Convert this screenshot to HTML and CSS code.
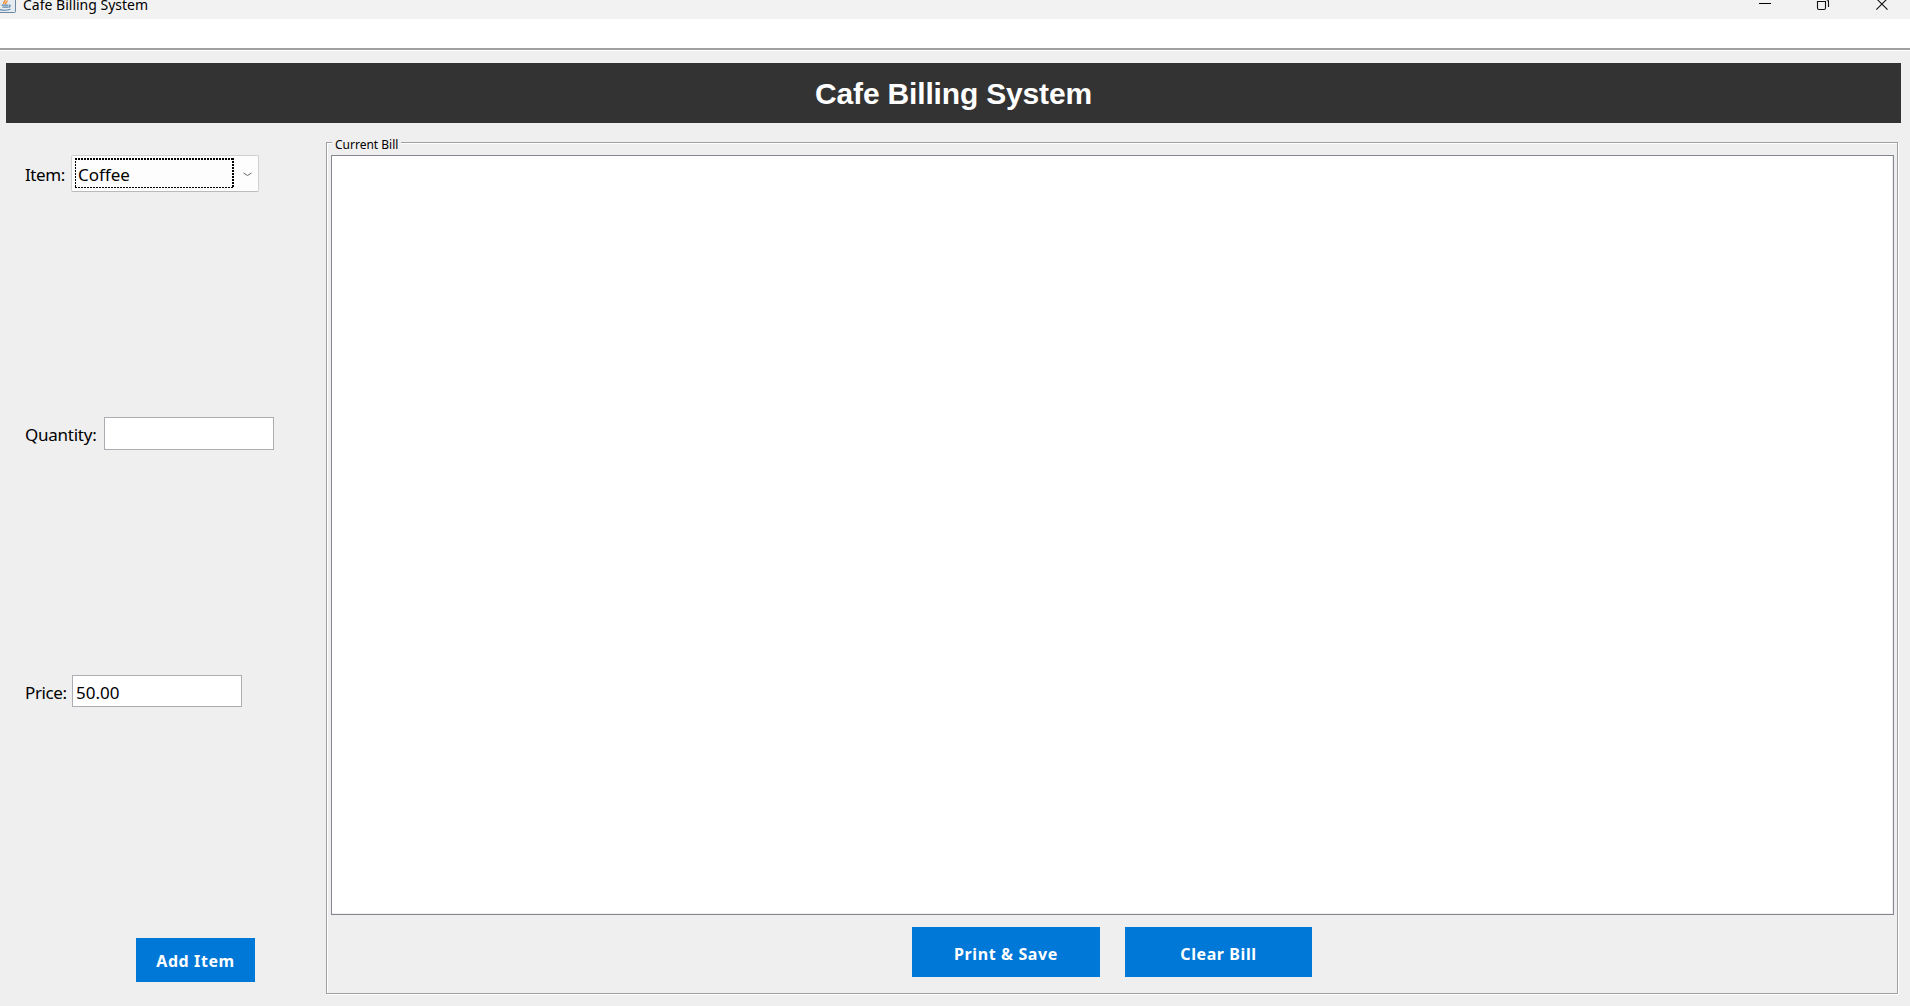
FILE: index.html
```html
<!DOCTYPE html>
<html lang="en">
<head>
<meta charset="utf-8">
<title>Cafe Billing System</title>
<link rel="stylesheet" href="styles.css">
</head>
<body>
<header class="titlebar">
  <svg class="app-icon" width="16" height="13" viewBox="0 0 16 13">
    <path d="M-1 -2H15.500V11.500Q15.500 12.500 14.500 12.500H-1" fill="#e6ebf0" stroke="#6b87a3"/>
    <path d="M4.500 4C2 2 6.500 1 5 -1M6 4C4.500 2.500 8 2 7 .5" fill="none" stroke="#f08a28" stroke-width="1.3"/>
    <path d="M1.500 5.200H8.500M2.500 7.200H8.500M0 9.700Q5 11 10.500 9.300M9 5Q11.500 5 9 7.500" fill="none" stroke="#5d88ad" stroke-width="1.2"/>
  </svg>
  <span class="window-title">Cafe Billing System</span>
  <svg class="window-controls" width="132" height="12" viewBox="0 0 132 12">
    <path d="M2 3.500H14" stroke="#000" fill="none"/>
    <path d="M60.500 1.500H68.500V8Q68.500 9.500 67 9.500H62Q60.500 9.500 60.500 8ZM63 -.5H69Q71.500 -.5 71.500 2V7" stroke="#111" stroke-width="1.1" fill="none"/>
    <path d="M119.300 -1.500L130.500 9.700M130.500 -1.500L119.300 9.700" stroke="#111" stroke-width="1.1" fill="none"/>
  </svg>
</header>
<div class="menubar"></div>
<h1 class="banner"><span>Cafe Billing System</span></h1>
<main class="content">
  <section class="form">
    <div class="row item-row">
      <span class="label item-label">Item:</span>
      <div class="combo">
        <div class="combo-value"><svg class="focus" width="159" height="30"><path d="M0 1H159M158 0V30" fill="none" stroke="#000" stroke-width="2" stroke-dasharray="2 1"/><path d="M0 29.500H159M.5 0V30" fill="none" stroke="#000" stroke-dasharray="2 1"/></svg><span class="coffee">Coffee</span></div>
        <svg class="arrow" width="9" height="5" viewBox="0 0 9 5"><path d="M.5 1L4.500 3.500L8.500 1" fill="none" stroke="#666"/></svg>
      </div>
    </div>
    <div class="row quantity-row">
      <span class="label quantity-label">Quantity:</span>
      <div class="field"></div>
    </div>
    <div class="row price-row">
      <span class="label price-label">Price:</span>
      <div class="field"><span class="amount">50.00</span></div>
    </div>
    <button class="button add"><span>Add Item</span></button>
  </section>
  <section class="bill">
    <div class="bill-title"><span>Current Bill</span></div>
    <div class="bill-text"></div>
    <div class="actions">
      <button class="button print"><span>Print &amp; Save</span></button>
      <button class="button clear"><span>Clear Bill</span></button>
    </div>
  </section>
</main>
</body>
</html>
```
FILE: styles.css
```css
* { box-sizing: border-box; }
body {
  margin: 0;
  height: 1006px;
  overflow: hidden;
  display: flex;
  flex-direction: column;
  background: #efefef;
  color: #000;
  font-family: "Noto Sans", "Open Sans", sans-serif;
}
svg { display: block; flex: none; }
.titlebar {
  display: flex;
  align-items: flex-start;
  height: 19px;
  background: #f2f2f2;
}
.window-title {
  margin-left: 7px;
  margin-top: -5px;
  font-size: 14px;
  line-height: 20px;
  white-space: nowrap;
}
.window-controls { margin-left: auto; margin-right: 21px; }
.menubar {
  height: 32px;
  background: #fff;
  border-bottom: 1px solid #fff;
  box-shadow: inset 0 -2px #a0a0a0;
}
.banner {
  display: flex;
  justify-content: center;
  margin: 12px 9px 0 6px;
  height: 60px;
  background: #333;
  color: #fff;
  font: bold 30px/62px "Liberation Sans", Arial, sans-serif;
  letter-spacing: -0.17px;
}
.content { display: flex; height: 883px; }
.form { width: 326px; padding: 32px 0 0 25px; }
.row { display: flex; }
.item-row { height: 37px; margin-bottom: 225px; }
.quantity-row { height: 33px; margin-bottom: 225px; }
.price-row { height: 32px; margin-bottom: 231px; }
.label { font-size: 17px; line-height: 36px; letter-spacing: -0.25px; white-space: nowrap; flex: none; }
.item-label { width: 46px; line-height: 40px; letter-spacing: -0.4px; }
.quantity-label { width: 79px; }
.price-label { width: 47px; letter-spacing: -0.4px; }
.combo {
  display: flex;
  align-items: center;
  width: 188px;
  height: 37px;
  padding-left: 3px;
  background: #fdfdfd;
  border: 1px solid #d0d0d0;
  border-bottom-color: #bbb;
  border-radius: 2px;
}
.combo-value { display: grid; width: 159px; height: 30px; margin-top: -1px; }
.focus, .coffee { grid-area: 1 / 1; }
.coffee { padding-left: 3px; font-size: 17px; line-height: 34px; }
.arrow { margin-left: 9px; margin-top: 1px; }
.field {
  width: 170px;
  height: 100%;
  padding-left: 3px;
  background: #fff;
  border: 1px solid #abadb3;
  font-size: 17px;
  line-height: 34px;
}
.button {
  display: block;
  border: 0;
  padding: 0;
  background: #0078d7;
  color: #fff;
  font: bold 16px/54px "Noto Sans", "Open Sans", sans-serif;
  letter-spacing: 0.6px;
  white-space: nowrap;
}
.add { width: 119px; height: 44px; margin-left: 111px; line-height: 46px; }
.bill {
  width: 1572px;
  height: 852px;
  margin-top: 19px;
  padding: 0 3px 0 4px;
  border: 1px solid #a0a0a0;
  box-shadow: 1px 1px #fff, inset 1px 1px #fff;
}
.bill-title {
  width: 69px;
  height: 12px;
  margin-left: 1px;
  margin-top: -1px;
  padding-left: 3px;
  background: #efefef;
  font-size: 12px;
  line-height: 5px;
  white-space: nowrap;
}
.bill-text {
  height: 760px;
  margin-top: 1px;
  background: #fff;
  border: 1px solid #828790;
  box-shadow: inset -1px -1px #efefef;
}
.actions { display: flex; margin: 12px 0 0 581px; gap: 25px; }
.print { width: 188px; height: 50px; }
.clear { width: 187px; height: 50px; }
```
